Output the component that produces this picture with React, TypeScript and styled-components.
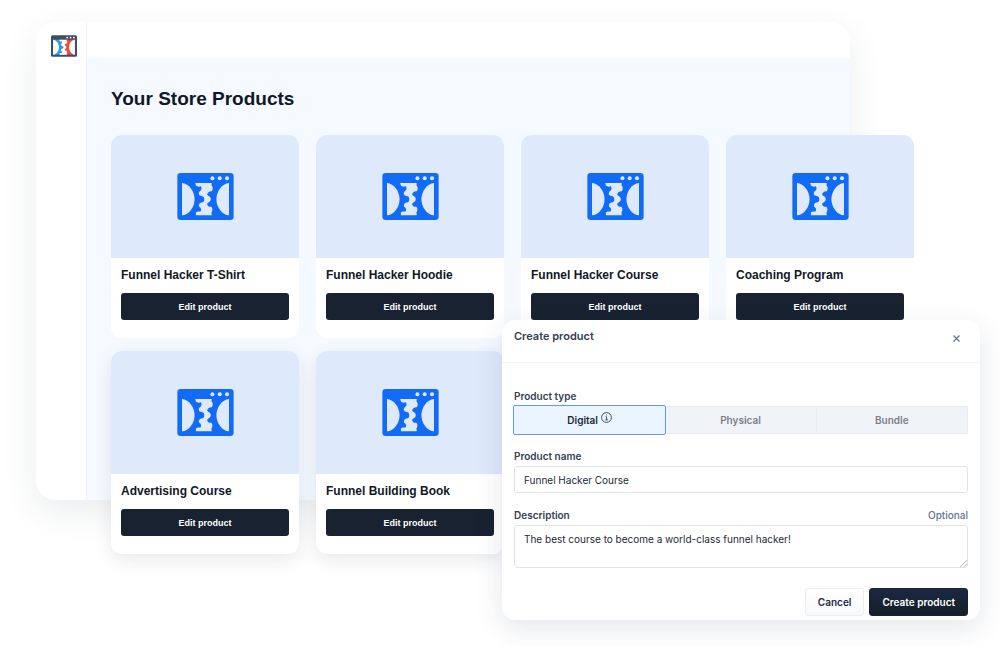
import React from "react";
import styled, { createGlobalStyle } from "styled-components";

const GlobalStyle = createGlobalStyle`
  *, *::before, *::after { box-sizing: border-box; }
  body {
    margin: 0;
    background: #ffffff;
    font-family: "Liberation Sans", Arial, sans-serif;
    color: #101828;
  }
  h1, h2, h3 { margin: 0; }
  button, input, textarea { font: inherit; }
`;

const Page = styled.div`
  position: relative;
  min-height: 100vh;
  padding: 22px 15% 92px 36px;
  overflow: hidden;
`;

const Window = styled.div`
  display: flex;
  border-radius: 20px;
  background: #ffffff;
  box-shadow: 0 12px 36px rgba(30, 50, 80, 0.09);
`;

const Sidebar = styled.aside`
  flex: none;
  width: 51px;
  padding: 13px 0 0 15px;
  border-right: 1px solid #edf2f7;
`;

const Content = styled.div`
  flex: 1;
  min-width: 0;
`;

const TopBar = styled.header`
  height: 36px;
`;

const Main = styled.main`
  display: flow-root;
  padding: 29px 0 0 24px;
  background: #f4faff;
`;

const Heading = styled.h1`
  font-size: 19px;
  line-height: 24px;
  font-weight: 700;
`;

/* The shelf runs past the right and bottom edges of the window. */
const Shelf = styled.ul`
  display: grid;
  grid-template-columns: repeat(4, minmax(0, 1fr));
  gap: 13px 17px;
  margin: 24px -64px -54px 0;
  padding: 0;
  list-style: none;
`;

const Card = styled.li<{ $raised: boolean }>`
  border-radius: 11px;
  background: #ffffff;
  overflow: hidden;
  box-shadow: ${(p) => (p.$raised ? "0 6px 18px rgba(30, 40, 60, 0.1)" : "none")};
`;

const Cover = styled.div`
  display: flex;
  align-items: center;
  justify-content: center;
  height: 123px;
  background: #dee9fc;
`;

const CardBody = styled.div`
  display: flex;
  flex-direction: column;
  gap: 9px;
  padding: 8px 10px 18px;
`;

const CardTitle = styled.h2`
  font-size: 12px;
  line-height: 18px;
  font-weight: 700;
  white-space: nowrap;
`;

const EditButton = styled.button`
  height: 27px;
  padding: 0;
  border: 0;
  border-radius: 3px;
  background: #182230;
  color: #ffffff;
  font-size: 9px;
  font-weight: 700;
`;

const Dialog = styled.section`
  position: absolute;
  top: 320px;
  right: 20px;
  width: 478px;
  border-radius: 13px;
  background: #ffffff;
  box-shadow: 0 8px 28px rgba(30, 50, 80, 0.12);
  font-family: Inter, sans-serif;
  font-size: 10px;
  line-height: 16px;
  color: #344054;
`;

const DialogHeader = styled.header`
  display: flex;
  justify-content: space-between;
  height: 43px;
  padding: 8px 18px 0 12px;
  border-bottom: 1px solid #f2f4f7;
`;

const DialogTitle = styled.h2`
  font-size: 11px;
  line-height: 16px;
  font-weight: 600;
`;

const CloseButton = styled.button`
  display: flex;
  align-items: center;
  justify-content: center;
  width: 11px;
  height: 21px;
  padding: 0;
  border: 0;
  background: none;
  color: #64748b;
`;

const Form = styled.form`
  display: flex;
  flex-direction: column;
  gap: 14px;
  padding: 25px 12px 4px;
`;

const Field = styled.div`
  display: flex;
  flex-direction: column;
  gap: 2px;
`;

const LabelRow = styled.div`
  display: flex;
  justify-content: space-between;
  font-weight: 600;
`;

const Hint = styled.span`
  color: #5f7590;
  font-weight: 500;
`;

const Segments = styled.div`
  display: grid;
  grid-template-columns: repeat(3, minmax(0, 1fr));
  height: 28px;
`;

const Segment = styled.button<{ $active?: boolean }>`
  display: flex;
  align-items: center;
  justify-content: center;
  gap: 3px;
  margin: ${(p) => (p.$active ? "-1px" : "0")};
  padding: 0;
  border: 1px solid ${(p) => (p.$active ? "#6199f0" : "#e6eaef")};
  border-radius: ${(p) => (p.$active ? "2px" : "0")};
  background: ${(p) => (p.$active ? "#ebf5ff" : "#f0f3f8")};
  color: ${(p) => (p.$active ? "#1d2939" : "#7b8087")};
  font-weight: 600;
  z-index: ${(p) => (p.$active ? 1 : 0)};

  & + & {
    border-left-width: ${(p) => (p.$active ? "1px" : "0")};
  }

  svg {
    align-self: flex-start;
    margin-top: 6px;
  }
`;

const TextInput = styled.input`
  width: 100%;
  height: 27px;
  padding: 0 9px;
  border: 1px solid #dfe4ea;
  border-radius: 3px;
  background: #ffffff;
  color: #1d2939;
`;

const TextArea = styled.textarea`
  display: block;
  width: 100%;
  height: 43px;
  padding: 5px 9px;
  border: 1px solid #dfe4ea;
  border-radius: 3px;
  background: #ffffff;
  color: #1d2939;
  resize: vertical;

  &::-webkit-resizer {
    background: linear-gradient(
      135deg,
      transparent 76%,
      #b4bbc5 76%,
      #b4bbc5 80%,
      transparent 80%,
      transparent 88%,
      #b4bbc5 88%,
      #b4bbc5 92%,
      transparent 92%
    );
  }
`;

const Actions = styled.div`
  display: flex;
  justify-content: flex-end;
  gap: 5px;
  padding-top: 6px;
`;

const ActionButton = styled.button<{ $primary?: boolean }>`
  height: 28px;
  padding: 0 12px;
  border: 1px solid ${(p) => (p.$primary ? "#182230" : "#eceef1")};
  border-radius: 3px;
  background: ${(p) =>
    p.$primary
      ? "linear-gradient(#1a2841, #15202b)"
      : "linear-gradient(#ffffff, #f7f8fa)"};
  color: ${(p) => (p.$primary ? "#ffffff" : "#1d2939")};
  font-weight: 600;
`;

type FunnelProps = {
  width: number;
  height: number;
  frame: string;
  left: string;
  right: string;
  light: string;
};

function FunnelIcon({ width, height, frame, left, right, light }: FunnelProps) {
  return (
    <svg width={width} height={height} viewBox="0 0 170 142" aria-hidden="true">
      <rect width="170" height="142" rx="10" fill={frame} />
      <rect x="13" y="30" width="72" height="98" fill={left} />
      <rect x="85" y="30" width="72" height="98" fill={right} />
      <g fill={light}>
        <circle cx="106" cy="16" r="6" />
        <circle cx="128" cy="16" r="6" />
        <circle cx="150" cy="16" r="6" />
        <path d="M14 30 C35 32 52 55 52 79 S35 126 14 128 Z" />
        <path d="M156 30 C135 32 118 55 118 79 S135 126 156 128 Z" />
        <path d="M54 30 H104 L103 38 C108 41 108 51 104 55 C97 54 91 58 90 66 C94 70 101 72 101 79 C101 86 94 88 90 92 C90 99 95 103 103 102 C107 108 107 114 103 119 L104 128 H56 V119 C60 115 65 116 69 117 C74 112 72 106 66 102 C63 95 67 90 73 89 C79 88 82 84 81 79 C82 73 78 70 71 69 C64 68 63 61 67 56 C73 52 75 46 71 40 C66 42 60 42 56 38 Z" />
      </g>
    </svg>
  );
}

const products = [
  "Funnel Hacker T-Shirt",
  "Funnel Hacker Hoodie",
  "Funnel Hacker Course",
  "Coaching Program",
  "Advertising Course",
  "Funnel Building Book",
];

export default function App() {
  return (
    <>
      <GlobalStyle />
      <Page>
        <Window>
          <Sidebar>
            <FunnelIcon width={26} height={22} frame="#3f4f63" left="#2f9be0" right="#ee4b37" light="#ffffff" />
          </Sidebar>
          <Content>
            <TopBar />
            <Main>
              <Heading>Your Store Products</Heading>
              <Shelf>
                {products.map((name, index) => (
                  <Card key={name} $raised={index > 3}>
                    <Cover>
                      <FunnelIcon width={57} height={47} frame="#126bf5" left="#126bf5" right="#126bf5" light="#dee9fc" />
                    </Cover>
                    <CardBody>
                      <CardTitle>{name}</CardTitle>
                      <EditButton type="button">Edit product</EditButton>
                    </CardBody>
                  </Card>
                ))}
              </Shelf>
            </Main>
          </Content>
        </Window>

        <Dialog role="dialog" aria-labelledby="dialog-title">
          <DialogHeader>
            <DialogTitle id="dialog-title">Create product</DialogTitle>
            <CloseButton type="button" aria-label="Close">
              <svg width="7" height="7" viewBox="0 0 7 7" fill="none" stroke="currentColor" strokeWidth="1.2">
                <path d="M0.5 0.5 6.5 6.5M6.5 0.5 0.5 6.5" />
              </svg>
            </CloseButton>
          </DialogHeader>
          <Form onSubmit={(event) => event.preventDefault()}>
            <Field role="group" aria-labelledby="type-label">
              <LabelRow>
                <span id="type-label">Product type</span>
              </LabelRow>
              <Segments>
                <Segment type="button" $active aria-pressed="true">
                  Digital
                  <svg width="11" height="11" viewBox="0 0 11 11" fill="none" stroke="currentColor" aria-hidden="true">
                    <circle cx="5.5" cy="5.5" r="4.9" strokeWidth="0.8" />
                    <path d="M4.5 4.8H5.6V7.8M4.3 7.9H6.9M5.1 3H5.9" strokeWidth="0.8" />
                  </svg>
                </Segment>
                <Segment type="button" aria-pressed="false">Physical</Segment>
                <Segment type="button" aria-pressed="false">Bundle</Segment>
              </Segments>
            </Field>
            <Field>
              <LabelRow>
                <label htmlFor="product-name">Product name</label>
              </LabelRow>
              <TextInput id="product-name" defaultValue="Funnel Hacker Course" />
            </Field>
            <Field>
              <LabelRow>
                <label htmlFor="description">Description</label>
                <Hint>Optional</Hint>
              </LabelRow>
              <TextArea id="description" defaultValue="The best course to become a world-class funnel hacker!" />
            </Field>
            <Actions>
              <ActionButton type="button">Cancel</ActionButton>
              <ActionButton type="submit" $primary>Create product</ActionButton>
            </Actions>
          </Form>
        </Dialog>
      </Page>
    </>
  );
}
